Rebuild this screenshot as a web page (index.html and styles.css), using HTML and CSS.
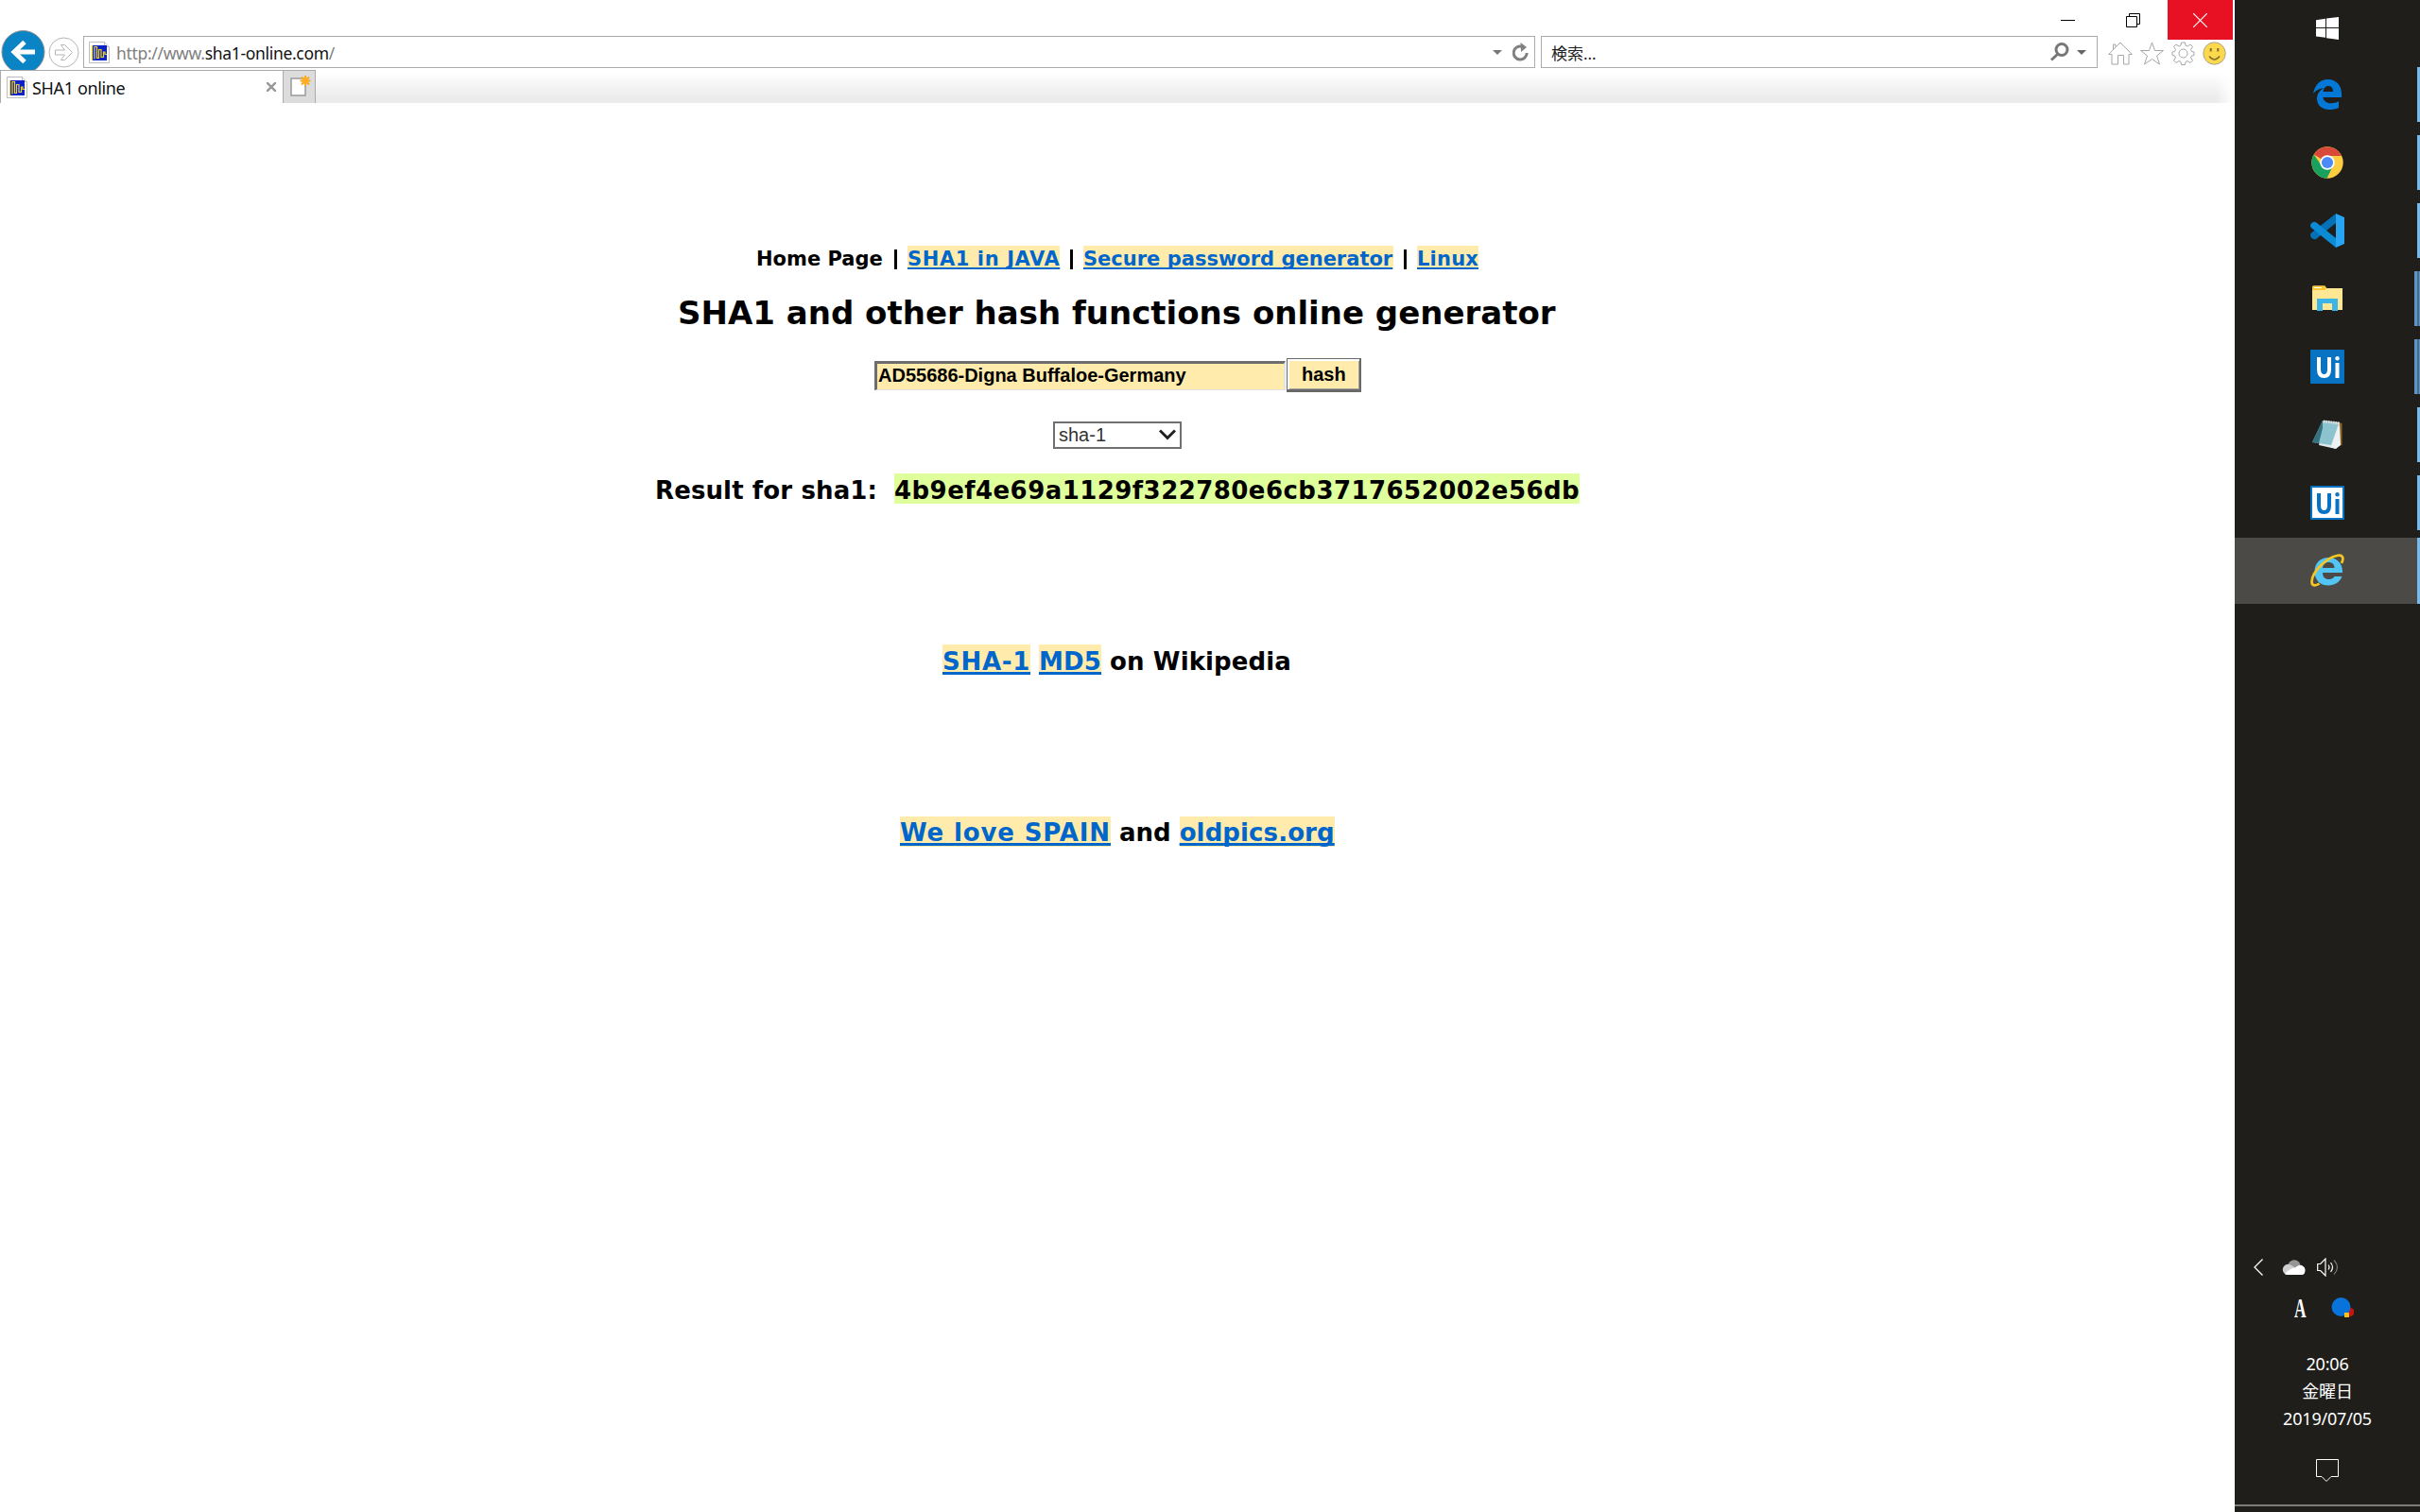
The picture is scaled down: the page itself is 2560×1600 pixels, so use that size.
FILE: index.html
```html
<!DOCTYPE html>
<html lang="ja">
<head>
<meta charset="utf-8">
<title>SHA1 online</title>
<link rel="stylesheet" href="styles.css">
</head>
<body>
<svg class="defs" width="0" height="0">
  <symbol id="favicon" viewBox="0 0 22 23">
    <path d="M.5.5h16l5 5v17H.5z" fill="#fff" stroke="#bdbdbd"/>
    <path d="M16.5.5v5h5" fill="#eee" stroke="#bdbdbd"/>
    <path d="M3 4h16v16H3z" fill="#0a22c8"/>
    <path d="M3.500 4v16M6 18.500V5.500h2.500v12h2V8.500H13v8h2.500V11H17v2.500h2" fill="none" stroke="#f3d21b" stroke-width="1.200"/>
  </symbol>
</svg>
<div class="desktop">
  <main class="browser">
    <header class="chrome">
      <div class="titlebar">
        <span class="wbtn"><svg width="15" height="15"><path d="M0 7.500h15" stroke="#000"/></svg></span>
        <span class="wbtn"><svg width="15" height="15" fill="none" stroke="#000"><path d="M.5 3.500h11v11H.5zM3.500 3.500v-3h11v11h-3"/></svg></span>
        <span class="wbtn close"><svg width="15" height="15"><path d="M0 0l15 15M15 0L0 15" stroke="#fff" stroke-width="1.200"/></svg></span>
      </div>
      <div class="navbar">
        <svg class="back" width="48" height="42" viewBox="0 0 48 42"><circle cx="24.500" cy="23" r="22.500" fill="#0a84c4" stroke="#8c8c8c"/><path d="M37 23H15M26 12.500L15 23l11 10.500" fill="none" stroke="#fff" stroke-width="5"/></svg>
        <svg class="fwd" width="33" height="33" viewBox="0 0 33 33" fill="none" stroke="#b5b5b5"><circle cx="16.500" cy="16.500" r="15.500"/><path d="M7.500 14h10l-4-5.500h4l8 8-8 8h-4l4-5.500h-10z"/></svg>
        <div class="address">
          <svg class="fav" width="22" height="23"><use href="#favicon"/></svg>
          <span class="url"><i>http://www.</i>sha1-online.com<i>/</i></span>
          <svg class="caret" width="10" height="5"><path d="M0 0h10L5 5z" fill="#777"/></svg>
          <svg class="reload" width="18" height="20" viewBox="0 0 18 20"><path d="M10 4.200A7 7 0 1 0 15.200 11" fill="none" stroke="#808080" stroke-width="3"/><path d="M8.500 0l6.500 5-6 5z" fill="#808080"/></svg>
        </div>
        <div class="search">
          <span class="hint">検索...</span>
          <svg class="mag" width="20" height="20" viewBox="0 0 20 20" fill="none" stroke="#777"><circle cx="12" cy="7.500" r="6" stroke-width="3"/><path d="M8 12L1 18.500" stroke-width="3"/></svg>
          <svg class="caret2" width="10" height="5"><path d="M0 0h10L5 5z" fill="#666"/></svg>
        </div>
        <div class="tools">
          <svg width="26" height="25" viewBox="0 0 26 25" fill="none" stroke="#a6a6a6"><path d="M.7 13.500L13 1l12.300 12.500H22V24h-5.500v-9.500h-6V24H4V13.500zM5.500 8.500V3H8v3"/></svg>
          <svg width="25" height="25" viewBox="0 0 25 25" fill="none" stroke="#a6a6a6"><path d="M12.500 1l3 8.500h9L17.500 15l3 9-8-5.500-8 5.500 3-9-7-5.500h9z"/></svg>
          <svg width="25" height="25" viewBox="0 0 25 25" fill="none" stroke="#a6a6a6"><circle cx="12.500" cy="12.500" r="4.500"/><path d="M10 4l.5-3h4l.5 3 2 1 3-2 2.500 2.500-2 3 1 2 2.500.5v3.500l-2.500.5-1 2 2 3-2.500 2.500-3-2-2 1-.5 3h-4l-.5-3-2-1-3 2L2.500 20l2-3-1-2-2.500-.5V11l2.500-.5 1-2-2-3L5 3l3 2z"/></svg>
          <svg width="25" height="25" viewBox="0 0 25 25"><circle cx="12.500" cy="12.500" r="11.700" fill="#fcd84d" stroke="#a8a494"/><path d="M8.700 7v3.500M16.300 7v3.500" stroke="#80702f" stroke-width="2"/><path d="M7 15.500q5.500 7 11 0" fill="none" stroke="#80702f" stroke-width="1.500"/></svg>
        </div>
      </div>
      <div class="tabs">
        <div class="tab"><svg class="fav" width="22" height="23"><use href="#favicon"/></svg><span>SHA1 online</span><svg class="x" width="10" height="10"><path d="M0 0l10 10M10 0L0 10" stroke="#999" stroke-width="2.500"/></svg></div>
        <div class="newtab"><svg width="22" height="23" viewBox="0 0 22 23"><path d="M1 3h15v18H1z" fill="#fff" stroke="#999" stroke-width="1.500"/><path d="M16 0v11M10.500 5.500h11M12 1.500l8 8M20 1.500l-8 8" stroke="#f8a720" stroke-width="2"/><circle cx="16" cy="5.500" r="3.500" fill="#ffad22"/></svg></div>
        <div class="strip"></div>
      </div>
    </header>
    <section class="page">
      <nav class="row links"><span class="home">Home Page</span><b class="bar"></b><a class="java">SHA1 in JAVA</a><b class="bar"></b><a class="secure">Secure password generator</a><b class="bar"></b><a class="linux">Linux</a></nav>
      <h1 class="row title">SHA1 and other hash functions online generator</h1>
      <div class="form"><div class="field">AD55686-Digna Buffaloe-Germany</div><div class="hash">hash</div></div>
      <div class="select"><span>sha-1</span><svg width="18" height="13" viewBox="0 0 18 13"><path d="M1 1.500l8 8 8-8" fill="none" stroke="#222" stroke-width="3"/></svg></div>
      <div class="row big result"><span class="label">Result for sha1:</span><mark>4b9ef4e69a1129f322780e6cb3717652002e56db</mark></div>
      <div class="row big wiki"><a class="sha">SHA-1</a><a class="md">MD5</a><span class="on">on Wikipedia</span></div>
      <div class="row big spain"><a class="love">We love SPAIN</a><span>and</span><a class="old">oldpics.org</a></div>
    </section>
  </main>
  <aside class="taskbar">
    <div class="app start"><svg width="24" height="24" viewBox="0 0 24 24" fill="#fff"><path d="M0 3.200L10 1.700V11H0zM11 1.500L24 0v11H11zM0 12h10v9.700L0 20.500zM11 12h13v12l-13-1.700z"/></svg></div>
    <div class="app run"><svg width="30" height="32" viewBox="0 0 30 32"><path d="M0 15C2 5 8 0 15.500 0 25 0 30 7 30 15v4H10.500c.5 4 4 6.300 8.500 6.300 3.300 0 6-1 8-2.300v7C24 31.500 20.500 32 17 32 9 32 4 27 4 20.500 4 15 7 11.500 11 9.500 6 9.500 2.500 12 0 15zM10.500 13H21c0-4-2-6-5-6s-5 2.500-5.500 6z" fill="#0378d7"/></svg></div>
    <div class="app run"><svg width="34" height="34" viewBox="0 0 34 34"><circle cx="17" cy="17" r="16.700" fill="#ffcd40"/><path d="M17 17L2.700 8.500A16.700 16.700 0 0 1 32 10H17z" fill="#d9493a"/><path d="M2.700 8.500A16.700 16.700 0 0 0 16.500 33.700L23 20.500 17 17l-6 3.500z" fill="#17a05e"/><circle cx="17" cy="17" r="7.700" fill="#fff"/><circle cx="17" cy="17" r="6.100" fill="#4c8bf5"/></svg></div>
    <div class="app run"><svg width="36" height="36" viewBox="0 0 36 36"><path d="M27 0v10L6 27Q3 28 1 25.500q-2-3 0-5z" fill="#0470b6"/><path d="M1 10.500q2.500-3 6-.5l20 16v10L1 15q-2-2 0-4.500z" fill="#0b8bd6"/><path d="M27 0l9 4v28l-9 4z" fill="#27a5f2"/></svg></div>
    <div class="app run multi"><svg width="32" height="28" viewBox="0 0 32 28"><path d="M0 2q0-1.500 1.500-1.500H13l2 2.500h17v23H0z" fill="#ffe793"/><path d="M0 5V2Q0 .5 1.500.5h12L15 2.500 13.500 5z" fill="#fcc832"/><path d="M2 2.500h8" stroke="#fff"/><path d="M5 27V14h22v13h-6v-8H11v8z" fill="#3cb4e8"/></svg></div>
    <div class="app run multi"><div class="ui solid"><svg width="24" height="24" viewBox="0 0 24 24" fill="none" stroke="#fff" stroke-width="4"><path d="M2 1v13q0 7 5.500 7T13 14V1M21.500 7v16"/><circle cx="21.500" cy="2.300" r="1" stroke-width="2.500"/></svg></div></div>
    <div class="app run"><svg width="34" height="32" viewBox="0 0 34 32"><path d="M29 3l3.500 1v23L28 28z" fill="#8d6323"/><path d="M13 1l17 2-4 28-18-4z" fill="#dfe9ed"/><path d="M12 1l17 3-8 23L1 24z" fill="#8cc3ce"/><path d="M12 1L1 24l7 1 4-16z" fill="#34727f"/><path d="M30 5l1 22-5 4-5-2z" fill="#edf2f4"/><path d="M13 2l17 2" stroke="#ddd" stroke-width="3" stroke-dasharray="1.500 1"/></svg></div>
    <div class="app run"><div class="ui open"><svg width="24" height="24" viewBox="0 0 24 24" fill="none" stroke="#0873c2" stroke-width="4"><path d="M2 1v13q0 7 5.500 7T13 14V1M21.500 7v16"/><circle cx="21.500" cy="2.300" r="1" stroke-width="2.500"/></svg></div></div>
    <div class="app run active"><svg width="36" height="36" viewBox="0 0 36 36"><path d="M34 20H13c0 5 3 7 6.500 7 3 0 5-1 6-3h8C31 30 26 33.500 19 33.500 10 33.500 4.500 27.500 4.500 19S10 4 19 4s15.500 6 15 16zM13 15h12.500c0-4-2.500-6-6-6s-6 2-6.500 6z" fill="#52c5f4"/><path d="M33 10c3-6 1-9.500-5-8C18 4 2 18 1.500 29.500c0 5 4.500 4.500 8 2" fill="none" stroke="#f7c623" stroke-width="2.700"/></svg></div>
    <div class="tray">
      <div class="trow one">
        <svg width="10" height="18"><path d="M9.500.5L1 9l8.500 8.500" fill="none" stroke="#fff" stroke-width="1.300"/></svg>
        <svg width="25" height="16" viewBox="0 0 25 16"><circle cx="13" cy="7" r="6.700" fill="#969696"/><path d="M5 16a5.500 5.500 0 1 1 3-11l16 9q-1 2-3 2z" fill="#cfcfcf"/><path d="M3 15q5-6 11-6.500 3-3.500 7-2.500 4 2 3.500 6Q24 16 20 16H6q-2 0-3-1z" fill="#fff"/></svg>
        <svg width="23" height="20" viewBox="0 0 23 20" fill="none" stroke="#fff" stroke-width="1.200"><path d="M.7 6.500h3L9 1v18l-5.300-5.500h-3zM12 7.500q2 2.500 0 5M14.500 5q4 5 0 10"/><path d="M18 2.500q7 7.500 0 15" stroke="#777"/></svg>
      </div>
      <div class="trow two"><span class="ime">A</span><svg width="24" height="22" viewBox="0 0 24 22"><circle cx="20" cy="15.500" r="4.500" fill="#c9150c"/><circle cx="10.500" cy="10" r="10" fill="#0873da"/><path d="M14 16h5v5h-5z" fill="#fdc21a"/></svg></div>
      <div class="clock"><span>20:06</span><span>金曜日</span><span>2019/07/05</span></div>
      <svg class="note" width="24" height="25"><path d="M.5.5h23v18h-7.500l-5 5-5-5H.5z" fill="none" stroke="#fff"/></svg>
    </div>
    <div class="edge"></div>
  </aside>
</div>
</body>
</html>
```
FILE: styles.css
```css
* { box-sizing: border-box; }
body { margin: 0; background: #fff; font-family: "Noto Sans", "Noto Sans CJK JP", sans-serif; }
svg { display: block; flex: none; }
.defs { position: absolute; }
.desktop { display: flex; width: 2560px; height: 1600px; overflow: hidden; }
.browser { width: 2364px; height: 1600px; background: #fff; }

.titlebar { display: flex; justify-content: flex-end; height: 32px; padding-right: 2px; }
.wbtn { width: 69px; height: 42px; display: flex; align-items: center; justify-content: center; padding-right: 4px; }
.close { background: #e81123; padding: 0; }
.navbar { display: flex; height: 42px; align-items: flex-start; }
.fwd { margin: 7px 0 0 3px; }
.address, .search { display: flex; align-items: center; height: 34px; margin-top: 6px; border: 1px solid #ababab; }
.address { width: 1536px; margin-left: 4px; padding: 0 5px 0 5px; }
.url { margin: 2px 0 0 7px; flex: 1; color: #111; font-size: 17.5px; letter-spacing: -.32px; }
.url i { font-style: normal; color: #808080; }
.reload { margin-left: 11px; }
.search { width: 589px; margin-left: 6px; padding: 0 11px 0 10px; font-size: 17px; color: #222; }
.hint { flex: 1; }
.caret2 { margin-left: 8px; }
.tools { display: flex; gap: 8px; margin: 12px 0 0 11px; }
.tabs { display: flex; height: 35px; }
.tab { display: flex; align-items: center; width: 300px; padding: 0 7px 0 6px; border: 1px solid #ababab; border-bottom: 0; font-size: 18px; letter-spacing: -.35px; color: #111; }
.tab span { flex: 1; margin: 2px 0 0 5px; }
.newtab { width: 34px; padding: 5px 0 0 7px; border: 1px solid #ababab; border-width: 1px 1px 0 0; background: #dcdcdc; }
.strip { flex: 1; margin-right: 2px; background: linear-gradient(90deg, transparent calc(100% - 18px), #fff), linear-gradient(#fff 10%, #ebebeb 85%); }

.page { font-family: "DejaVu Sans", Verdana, sans-serif; font-weight: 700; color: #000; display: flow-root; }
.row { display: flex; white-space: nowrap; margin: 0; }
.row a { color: #06c; background: #ffecac; text-decoration: underline 3px; text-underline-offset: 2px; text-decoration-skip-ink: none; }
.links { height: 25px; margin: 151px 0 0 800px; font-size: 21px; line-height: 28px; }
.row.links a { text-decoration-thickness: 2px; }
.bar { width: 3px; height: 21px; margin: 4px 11px 0; background: #000; }
.home { width: 135px; }
.java { width: 161px; letter-spacing: .6px; }
.secure { width: 328px; }
.linux { width: 65px; letter-spacing: .2px; }
.title { font-size: 34px; height: 50px; line-height: 52px; margin: 20px 0 0 717px; }
.form { display: flex; height: 36px; margin: 24px 0 0 925px; align-items: center; font: 700 20px/26px "Liberation Sans", Arial, sans-serif; }
.field { width: 435px; height: 31px; padding: 0 1px; line-height: 24px; background: #ffecac; border: 3px solid; border-color: #6d6d6d #e3e3e3 #e3e3e3 #6d6d6d; border-width: 3px 2px 1px 3px; }
.hash { width: 79px; height: 36px; margin-left: 1px; padding-left: 15px; line-height: 32px; background: #ffecac; border: 1px solid #696969; border-width: 1px 2px 3px 1px; box-shadow: inset 2px 2px #fff, inset -1px -1px #a0a0a0; }
.select { display: flex; align-items: center; justify-content: space-between; width: 136px; height: 29px; margin: 31px 0 0 1114px; padding: 0 4px; border: 2px solid #707070; font: 400 20px/25px "Liberation Sans", Arial, sans-serif; color: #333; }
.big { height: 32px; font-size: 26px; line-height: 36px; }
.result { margin: 26px 0 0 693px; }
.label { width: 253px; letter-spacing: .12px; }
.wiki { margin: 149px 0 0 997px; gap: 9px; }
.sha { letter-spacing: .7px; }
.md { letter-spacing: .17px; }
.on { letter-spacing: .12px; }
.spain { margin: 150px 0 0 952px; gap: 9px; line-height: 35px; }
.love { letter-spacing: .86px; }
.old { letter-spacing: .1px; }
mark { background: #dfff9c; color: #000; letter-spacing: .45px; }

.taskbar { width: 196px; height: 1600px; background: #1f1e1a; color: #fff; display: flex; flex-direction: column; }
.app { display: flex; align-items: center; justify-content: center; height: 72px; position: relative; }
.start { height: 64px; padding-bottom: 4px; }
.run::after { content: ""; position: absolute; right: 0; top: 7px; width: 3px; height: 58px; background: #76b9ed; }
.multi::after { width: 6px; background: linear-gradient(90deg, #5f94c4 3px, #486d8a 3px 5px, #5f94c4 5px); }
.active { height: 70px; margin-top: 1px; background: #4b4a47; }
.active::after { top: 0; height: 70px; }
.ui { width: 36px; height: 36px; padding: 7px 0 0 7px; border-radius: 1px; }
.solid { background: #0873c2; }
.open { background: #fff; border: 2px solid #0873c2; padding: 5px 0 0 5px; }
.tray { margin-top: 692px; font-size: 18px; }
.trow { display: flex; align-items: center; }
.one { padding-left: 20px; height: 20px; }
.one svg:nth-child(2) { margin-left: 20px; }
.one svg:nth-child(3) { margin-left: 12px; }
.two { height: 26px; margin-top: 20px; padding-left: 63px; }
.ime { font: 700 29px/26px "Liberation Serif", serif; transform: scaleX(.6); transform-origin: 0 0; width: 39px; }
.clock { display: flex; flex-direction: column; align-items: center; margin-top: 32px; line-height: 29px; letter-spacing: -.2px; }
.note { margin: 28px 0 0 86px; }
.edge { height: 2px; margin-top: auto; margin-bottom: 6px; background: #7c7b77; }
```
